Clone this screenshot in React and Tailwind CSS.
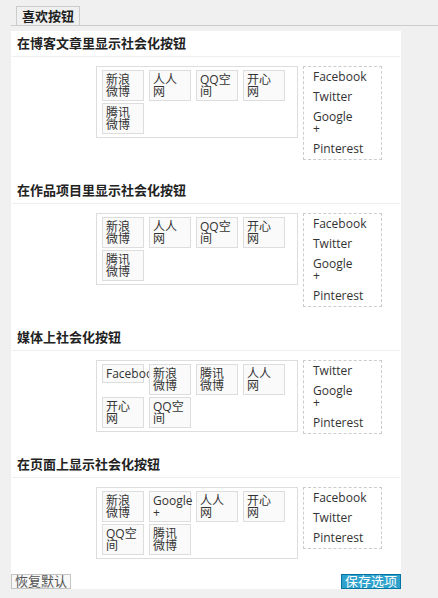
import React from 'react';

const SECTIONS = [
  {
    title: '在博客文章里显示社会化按钮',
    enabled: ['新浪微博', '人人网', 'QQ空间', '开心网', '腾讯微博'],
    available: ['Facebook', 'Twitter', 'Google +', 'Pinterest'],
  },
  {
    title: '在作品项目里显示社会化按钮',
    enabled: ['新浪微博', '人人网', 'QQ空间', '开心网', '腾讯微博'],
    available: ['Facebook', 'Twitter', 'Google +', 'Pinterest'],
  },
  {
    title: '媒体上社会化按钮',
    enabled: ['Facebook', '新浪微博', '腾讯微博', '人人网', '开心网', 'QQ空间'],
    available: ['Twitter', 'Google +', 'Pinterest'],
  },
  {
    title: '在页面上显示社会化按钮',
    enabled: ['新浪微博', 'Google +', '人人网', '开心网', 'QQ空间', '腾讯微博'],
    available: ['Facebook', 'Twitter', 'Pinterest'],
  },
];

const Section = ({ title, enabled, available, last }) => (
  <div className={last ? 'mb-[15px]' : 'mb-[18px]'}>
    {/* Heading */}
    <div className="mx-px h-[26px] border-b border-[#eeeeee] pl-[5px] flex items-center">
      <h3 className="text-[13px] leading-[13px] font-bold text-[#222]">{title}</h3>
    </div>

    {/* Sortable lists */}
    <div className="mt-[9px] pl-[85px] flex items-start">
      <div className="w-[202px] border border-[#dddddd] bg-white pt-[3px] pb-[3px] pl-[5px] flex flex-wrap items-start content-start gap-x-[5px] gap-y-[2px]">
        {enabled.map((name) => (
          <div
            key={name}
            className="w-[42px] border border-[#dddddd] bg-[#fafafa] pt-[3px] pb-[2px] pl-[3px] pr-[3px] text-[12px] leading-[12px] text-[#333]"
          >
            {name}
          </div>
        ))}
      </div>
      <div className="ml-[5px] w-[79px] border border-dashed border-[#cccccc] px-[5px]">
        {available.map((name) => (
          <div key={name} className="w-[42px] py-[4px] pl-[4px] pr-[3px] text-[12px] leading-[12px] text-[#333]">
            {name}
          </div>
        ))}
      </div>
    </div>
  </div>
);

export default function App() {
  return (
    <div className="min-h-screen bg-[#f0f0f0] pt-[6px] font-['Open_Sans','Noto_Sans_CJK_SC',sans-serif]">
      {/* Tabs */}
      <div className="ml-[11px] border-b border-[#cccccc] pl-[5px] flex">
        <div className="h-[19px] border border-b-0 border-[#cccccc] px-[5px] flex items-center text-[13px] leading-[13px] font-bold text-[#222]">
          喜欢按钮
        </div>
      </div>

      {/* Panel */}
      <div className="ml-[11px] mt-[5px] w-[390px] bg-white">
        {SECTIONS.map((s, i) => (
          <Section key={s.title} {...s} last={i === SECTIONS.length - 1} />
        ))}

        <div className="flex justify-between">
          <button className="h-[15px] w-[60px] border border-[#c4c4c4] bg-[#f7f7f7] text-[13px] leading-[13px] text-[#555] flex items-center justify-center">
            恢复默认
          </button>
          <button className="h-[15px] w-[60px] border border-[#0074a2] bg-[#2ea2cc] text-[13px] leading-[13px] text-white flex items-center justify-center">
            保存选项
          </button>
        </div>
      </div>
    </div>
  );
}
